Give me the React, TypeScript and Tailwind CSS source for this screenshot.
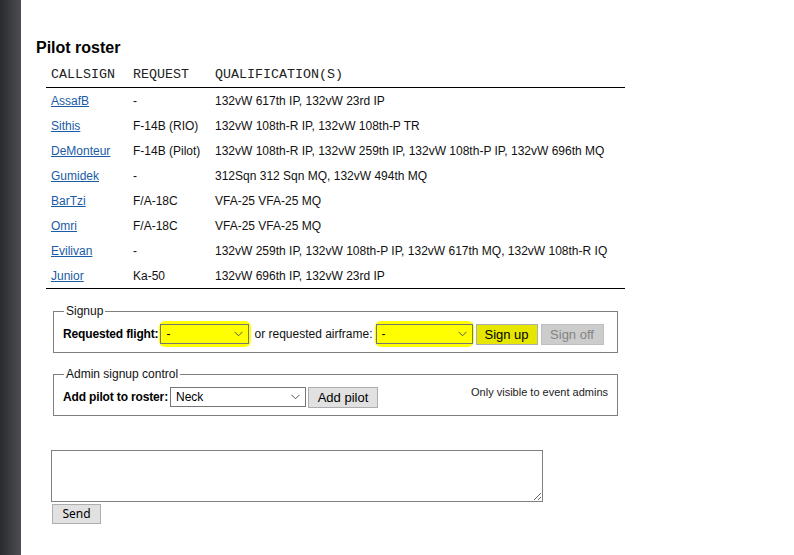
import React from "react";

const rows: { cs: string; req: string; q: string }[] = [
  { cs: "AssafB", req: "-", q: "132vW 617th IP, 132vW 23rd IP" },
  { cs: "Sithis", req: "F-14B (RIO)", q: "132vW 108th-R IP, 132vW 108th-P TR" },
  { cs: "DeMonteur", req: "F-14B (Pilot)", q: "132vW 108th-R IP, 132vW 259th IP, 132vW 108th-P IP, 132vW 696th MQ" },
  { cs: "Gumidek", req: "-", q: "312Sqn 312 Sqn MQ, 132vW 494th MQ" },
  { cs: "BarTzi", req: "F/A-18C", q: "VFA-25 VFA-25 MQ" },
  { cs: "Omri", req: "F/A-18C", q: "VFA-25 VFA-25 MQ" },
  { cs: "Evilivan", req: "-", q: "132vW 259th IP, 132vW 108th-P IP, 132vW 617th MQ, 132vW 108th-R IQ" },
  { cs: "Junior", req: "Ka-50", q: "132vW 696th IP, 132vW 23rd IP" },
];

function Chevron() {
  return (
    <svg width="9" height="6" viewBox="0 0 9 6" className="pointer-events-none absolute right-[6px] top-1/2 -translate-y-1/2">
      <path d="M0.5 0.8 L4.5 4.8 L8.5 0.8" fill="none" stroke="#555" strokeWidth="1" />
    </svg>
  );
}

function Select({ value, w, yellow }: { value: string; w: string; yellow?: boolean }) {
  return (
    <div className={`relative ${w} h-[20px]`}>
      <select
        className={`appearance-none w-full h-full border border-[#767676] pl-[5px] text-[12px] leading-none text-black outline-none ${yellow ? "bg-[#ffff00]" : "bg-white"}`}
        defaultValue={value}
      >
        <option>{value}</option>
      </select>
      <Chevron />
    </div>
  );
}

export default function App() {
  return (
    <div className="flex min-h-[555px] w-[794px] bg-white font-['Liberation_Sans',Arial,sans-serif] text-[12px] text-[#111]">
      <div className="w-[21px] shrink-0 bg-gradient-to-r from-[#2a2b2f] to-[#4d4e53]" />
      <div className="flex flex-col pl-[15px]">
        <h1 className="mt-[38px] h-[20px] text-[16px] font-bold leading-[20px] text-black">Pilot roster</h1>

        <div className="ml-[10px] mt-[5px] w-[579px]">
          <div className="grid h-[25px] grid-cols-[82px_82px_1fr] items-center border-b border-black font-['Liberation_Mono','Courier_New',monospace] text-[13.33px] text-[#222]">
            <div className="pl-[5px]">CALLSIGN</div>
            <div className="pl-[5px]">REQUEST</div>
            <div className="pl-[5px]">QUALIFICATION(S)</div>
          </div>
          <div className="border-b border-black">
            {rows.map((r) => (
              <div key={r.cs} className="grid h-[25px] grid-cols-[82px_82px_1fr] items-center">
                <div className="pl-[5px]">
                  <a href="#" className="text-[#1a5ba6] underline">{r.cs}</a>
                </div>
                <div className="pl-[5px]">{r.req}</div>
                <div className="pl-[5px] whitespace-nowrap">{r.q}</div>
              </div>
            ))}
          </div>
        </div>

        <fieldset className="ml-[17px] mt-[15px] w-[565px] border border-[#7f7f7f] pl-[9px] pr-[10px] pb-[7px] pt-[5px]">
          <legend className="ml-[1px] px-[2px] text-[12px] leading-[14px] text-[#111]">Signup</legend>
          <div className="flex h-[22px] items-center">
            <span className="font-bold text-black tracking-[-0.15px]">Requested flight:</span>
            <div className="ml-[1px] -my-[3px] rounded-[6px] bg-[#ffff00] py-[3px] pl-[1px] pr-[2px]">
              <Select value="-" w="w-[89px]" yellow />
            </div>
            <span className="ml-[3px]">or requested airframe:</span>
            <div className="ml-[2px] -my-[3px] rounded-[6px] bg-[#ffff00] py-[3px] pl-[1px] pr-[1px]">
              <Select value="-" w="w-[97px]" yellow />
            </div>
            <button className="ml-[2px] h-[21px] w-[62px] border border-[#adadad] bg-[#e6e600] text-[13px] text-black">Sign up</button>
            <button disabled className="ml-[3px] h-[21px] w-[63px] border border-[#bfbfbf] bg-[#cccccc] text-[13px] text-[#838383]">Sign off</button>
          </div>
        </fieldset>

        <fieldset className="ml-[17px] mt-[14px] w-[565px] border border-[#7f7f7f] pl-[9px] pr-[9px] pb-[7px] pt-[5px]">
          <legend className="ml-[1px] px-[2px] text-[12px] leading-[14px] text-[#111]">Admin signup control</legend>
          <div className="flex h-[22px] items-center">
            <span className="font-bold text-black tracking-[-0.15px]">Add pilot to roster:</span>
            <div className="ml-[2px]">
              <Select value="Neck" w="w-[136px]" />
            </div>
            <button className="ml-[2px] h-[21px] w-[70px] border border-[#adadad] bg-[#e1e1e1] text-[13px] text-black">Add pilot</button>
            <span className="ml-auto -mt-[9px] text-[11px] text-[#222]">Only visible to event admins</span>
          </div>
        </fieldset>

        <textarea className="ml-[15px] mt-[34px] block h-[52px] w-[492px] resize border border-[#7f7f7f] bg-white" />
        <button className="ml-[16px] mt-[2px] h-[20px] w-[49px] border border-[#adadad] bg-[#e1e1e1] font-['Noto_Sans',sans-serif] text-[12px] leading-none text-black">Send</button>
      </div>
    </div>
  );
}
